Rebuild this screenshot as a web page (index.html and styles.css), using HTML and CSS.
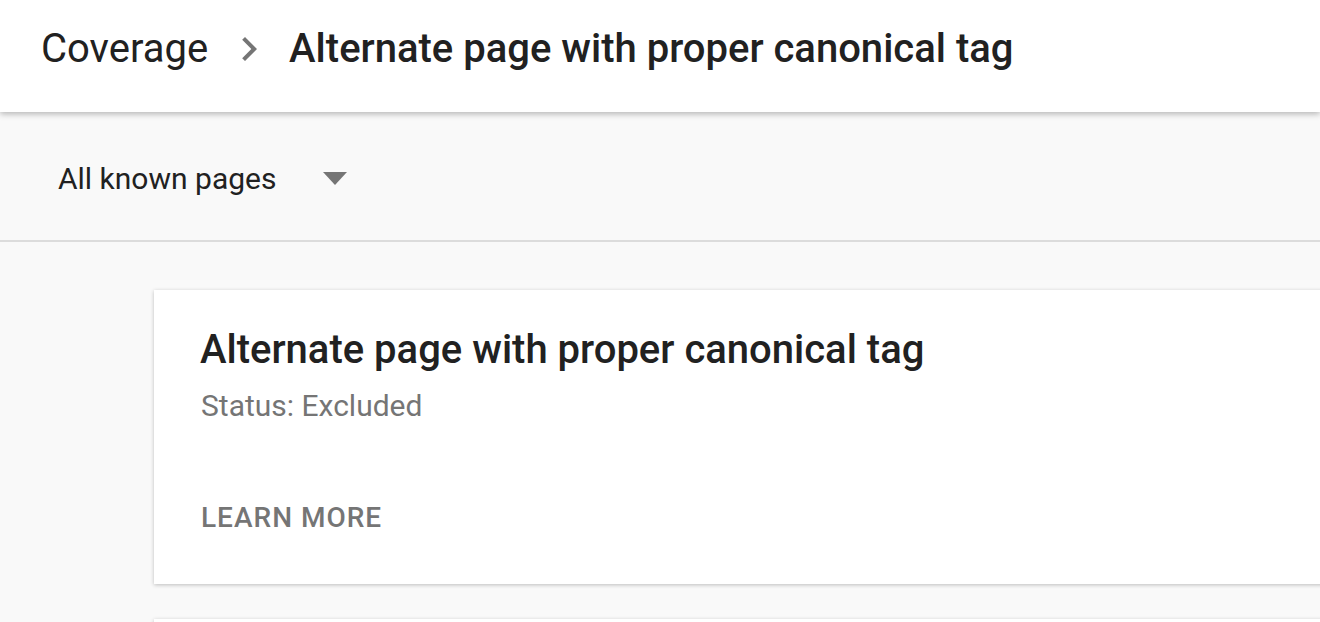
FILE: index.html
```html
<!DOCTYPE html>
<html lang="en">
<head>
<meta charset="utf-8">
<title>Coverage</title>
<link rel="stylesheet" href="styles.css">
</head>
<body>
<header class="topbar">
  <span class="crumb">Coverage</span>
  <svg class="chev" viewBox="0 0 24 24" width="48" height="48"><path d="M10 6L8.59 7.41 13.17 12l-4.58 4.59L10 18l6-6z" fill="#757575"/></svg>
  <h1 class="page-title">Alternate page with proper canonical tag</h1>
</header>
<div class="filterbar">
  <div class="select">
    <span class="select-label">All known pages</span>
    <svg class="caret" viewBox="0 0 24 13" width="24" height="13"><path d="M0 0h24L12 13z" fill="#757575"/></svg>
  </div>
</div>
<main class="content">
  <section class="card">
    <h2 class="card-title">Alternate page with proper canonical tag</h2>
    <p class="card-status">Status: Excluded</p>
    <a class="card-action" href="#">Learn more</a>
  </section>
  <section class="card card-next"></section>
</main>
</body>
</html>
```

FILE: styles.css
```css
* { box-sizing: border-box; }
html, body { margin: 0; padding: 0; }
body {
  font-family: Roboto, "Noto Sans", "Liberation Sans", sans-serif;
  background: #f9f9f9;
  color: #212121;
  overflow: hidden;
  height: 622px;
}
.topbar {
  position: relative;
  z-index: 2;
  height: 112px;
  background: #fff;
  display: flex;
  align-items: flex-start;
  padding: 25px 0 0 41px;
  box-shadow: 0 2px 6px rgba(0,0,0,0.28);
}
.crumb {
  font-size: 40px;
  line-height: 47px;
  font-weight: 400;
  color: #212121;
}
.chev {
  display: block;
  margin: 0 16px 0 17px;
}
.page-title {
  margin: 0;
  font-size: 40px;
  line-height: 47px;
  font-weight: 500;
  color: #212121;
}
.filterbar {
  height: 130px;
  background: #f9f9f9;
  border-bottom: 2px solid #dcdcdc;
  padding: 49px 0 0 58px;
}
.select {
  display: flex;
  align-items: flex-start;
}
.select-label {
  font-size: 30px;
  line-height: 36px;
  color: #212121;
}
.caret {
  display: block;
  margin: 11px 0 0 47px;
}
.content {
  padding: 48px 0 0 154px;
  display: flex;
  flex-direction: column;
  gap: 35px;
}
.card {
  width: 1200px;
  background: #fff;
  box-shadow: 0 1px 4px rgba(0,0,0,0.24);
  padding: 36px 0 50px 46px;
  display: flex;
  flex-direction: column;
  align-items: flex-start;
}
.card-title {
  margin: 0;
  font-size: 40px;
  line-height: 47px;
  font-weight: 500;
  color: #212121;
}
.card-status {
  margin: 15px 0 0 1px;
  font-size: 30px;
  line-height: 35px;
  color: #757575;
}
.card-action {
  margin: 78px 0 0 1px;
  font-size: 28px;
  line-height: 33px;
  font-weight: 500;
  letter-spacing: 1px;
  text-transform: uppercase;
  text-decoration: none;
  color: #757575;
}
.card-next {
  height: 200px;
  padding: 0;
}
```
